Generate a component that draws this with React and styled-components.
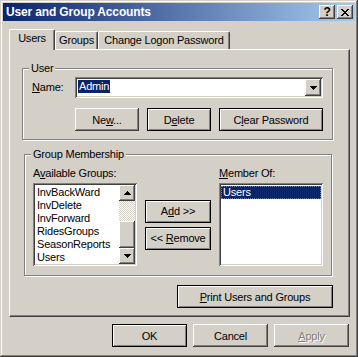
import React from 'react';
import styled, { createGlobalStyle, css } from 'styled-components';

const face = '#d4d0c8';
const shadow = '#808080';
const dark = '#404040';
const navy = '#0a246a';

const GlobalStyle = createGlobalStyle`
  html, body {
    margin: 0;
    padding: 0;
    background: ${face};
  }
  body {
    font-family: 'Liberation Sans', Arial, sans-serif;
    font-size: 11px;
    letter-spacing: -0.2px;
    color: #000;
  }
  * {
    box-sizing: border-box;
  }
`;

const raised = css`
  box-shadow: inset -1px -1px ${dark}, inset 1px 1px #fff, inset -2px -2px ${shadow},
    inset 2px 2px ${face};
`;

const sunken = css`
  box-shadow: inset 1px 1px ${shadow}, inset -1px -1px #fff, inset 2px 2px ${dark},
    inset -2px -2px ${face};
`;

const Window = styled.div`
  width: 358px;
  height: 357px;
  padding: 3px;
  display: flex;
  flex-direction: column;
  background: ${face};
  box-shadow: inset -1px -1px ${dark}, inset 1px 1px ${face}, inset -2px -2px ${shadow},
    inset 2px 2px #fff;
`;

const TitleBar = styled.div`
  height: 18px;
  display: flex;
  align-items: center;
  gap: 2px;
  padding: 0 2px 0 3px;
  background: linear-gradient(to right, ${navy}, #a6caf0);
`;

const Title = styled.div`
  flex: 1;
  color: #fff;
  font-weight: bold;
  font-size: 12px;
  letter-spacing: -0.15px;
  white-space: nowrap;
`;

const CaptionButton = styled.div`
  width: 16px;
  height: 14px;
  display: flex;
  align-items: center;
  justify-content: center;
  background: ${face};
  font-weight: bold;
  font-size: 12px;
  line-height: 1;
  ${raised};
`;

const TabArea = styled.div`
  margin: 8px 5px 0 6px;
`;

const TabStrip = styled.div`
  height: 20px;
  display: flex;
  align-items: flex-end;
`;

const Tab = styled.div`
  position: relative;
  z-index: ${({ $active }) => ($active ? 1 : 0)};
  width: ${({ $w }) => $w}px;
  height: ${({ $active }) => ($active ? 21 : 18)}px;
  margin-bottom: ${({ $active }) => ($active ? -1 : 0)}px;
  padding-top: 2px;
  background: ${face};
  border-top: 1px solid #fff;
  border-left: 1px solid #fff;
  border-right: 1px solid ${dark};
  border-radius: 2px 2px 0 0;
  box-shadow: inset -1px 0 ${shadow};
  text-align: center;
  line-height: 13px;
  white-space: nowrap;
`;

const Panel = styled.div`
  height: 268px;
  display: flex;
  flex-direction: column;
  align-items: flex-start;
  padding: 18px 0 0 12px;
  border-top: 1px solid #fff;
  border-left: 1px solid #fff;
  border-right: 1px solid ${dark};
  border-bottom: 1px solid ${dark};
  box-shadow: inset -1px -1px ${shadow};
`;

const GroupBox = styled.div`
  position: relative;
  width: ${({ $w }) => $w}px;
  margin: ${({ $margin }) => $margin || 0};
  padding: ${({ $pad }) => $pad};
  border: 1px solid ${shadow};
  box-shadow: inset 1px 1px #fff, 1px 1px #fff;
`;

const Legend = styled.span`
  position: absolute;
  top: -7px;
  left: 6px;
  padding: 0 2px;
  background: ${face};
  line-height: 13px;
`;

const UserGrid = styled.div`
  display: grid;
  grid-template-columns: 43px 248px;
  row-gap: 10px;
  align-items: center;
`;

const Label = styled.div`
  grid-column: ${({ $col }) => $col || 'auto'};
  line-height: 13px;
  white-space: nowrap;
`;

const Key = styled.span`
  text-decoration: underline;
`;

const Combo = styled.div`
  height: 21px;
  padding: 2px;
  display: flex;
  background: #fff;
  ${sunken};
`;

const ComboText = styled.div`
  flex: 1;
  padding: 1px 0 0 1px;
`;

const Highlight = styled.span`
  display: inline-block;
  padding: 0 1px;
  line-height: 13px;
  background: ${navy};
  color: #fff;
`;

const ArrowButton = styled.div`
  width: 16px;
  height: ${({ $h }) => ($h ? `${$h}px` : 'auto')};
  display: flex;
  align-items: center;
  justify-content: center;
  background: ${face};
  ${raised};
`;

const ButtonRow = styled.div`
  grid-column: 2;
  display: flex;
  gap: 8px;
`;

const Button = styled.button`
  width: ${({ $w }) => $w}px;
  height: 23px;
  margin: 0;
  padding: 0;
  font: inherit;
  letter-spacing: inherit;
  color: #000;
  background: ${face};
  white-space: nowrap;
  border: ${({ $framed }) => ($framed ? '1px solid #000' : 'none')};
  ${({ $framed }) =>
    $framed
      ? css`
          box-shadow: inset 1px 1px #fff, inset -1px -1px ${shadow};
        `
      : raised}
  ${({ disabled }) =>
    disabled &&
    css`
      color: ${shadow};
      text-shadow: 1px 1px #fff;
    `}
`;

const MemberGrid = styled.div`
  display: grid;
  grid-template-columns: 104px 66px 104px;
  grid-template-rows: 13px 83px;
  column-gap: 8px;
  row-gap: 3px;
`;

const MoveButtons = styled.div`
  grid-column: 2;
  display: flex;
  flex-direction: column;
  justify-content: center;
  gap: 4px;
`;

const ListBox = styled.div`
  height: 83px;
  padding: 2px;
  display: flex;
  overflow: hidden;
  background: #fff;
  ${sunken};
`;

const Items = styled.div`
  flex: 1;
  padding-top: 1px;
  overflow: hidden;
`;

const Item = styled.div`
  height: 13px;
  padding-left: 2px;
  line-height: 13px;
  white-space: nowrap;
  ${({ $selected }) =>
    $selected &&
    css`
      background: ${navy};
      color: #fff;
      outline: 1px dotted #6d7fae;
      outline-offset: -1px;
    `}
`;

const ScrollBar = styled.div`
  width: 16px;
  display: flex;
  flex-direction: column;
`;

const Track = styled.div`
  flex: 1;
  display: flex;
  flex-direction: column;
  justify-content: flex-end;
  background: repeating-conic-gradient(#fff 0% 25%, ${face} 0% 50%) 0 0 / 2px 2px;
`;

const Thumb = styled.div`
  height: 27px;
  background: ${face};
  ${raised};
`;

const PrintRow = styled.div`
  width: 311px;
  margin-top: 9px;
  display: flex;
  justify-content: flex-end;
`;

const Footer = styled.div`
  display: flex;
  justify-content: flex-end;
  gap: 6px;
  margin: 7px 6px 0 0;
`;

const Arrow = ({ up }) => (
  <svg width="7" height="4" viewBox="0 0 7 4" shapeRendering="crispEdges">
    <path
      d={up ? 'M3 0h1v1h1v1h1v1h1v1H0V3h1V2h1V1h1z' : 'M0 0h7v1H6v1H5v1H4v1H3V3H2V2H1V1H0z'}
      fill="#000"
    />
  </svg>
);

const CloseGlyph = () => (
  <svg width="8" height="7" viewBox="0 0 8 7" shapeRendering="crispEdges">
    <path
      d="M0 0h2v1h1v1h2V1h1V0h2v1H7v1H6v1H5v1h1v1h1v1h1v1H6V6H5V5H3v1H2v1H0V6h1V5h1V4h1V3H2V2H1V1H0z"
      fill="#000"
    />
  </svg>
);

const groups = ['InvBackWard', 'InvDelete', 'InvForward', 'RidesGroups', 'SeasonReports', 'Users'];

const App = () => (
  <>
    <GlobalStyle />
    <Window>
      <TitleBar>
        <Title>User and Group Accounts</Title>
        <CaptionButton>?</CaptionButton>
        <CaptionButton>
          <CloseGlyph />
        </CaptionButton>
      </TitleBar>

      <TabArea>
        <TabStrip>
          <Tab $active $w={46}>Users</Tab>
          <Tab $w={43}>Groups</Tab>
          <Tab $w={132}>Change Logon Password</Tab>
        </TabStrip>
        <Panel>
          <GroupBox $w={311} $pad="8px 9px">
            <Legend>User</Legend>
            <UserGrid>
              <Label>
                <Key>N</Key>ame:
              </Label>
              <Combo>
                <ComboText>
                  <Highlight>Admin</Highlight>
                </ComboText>
                <ArrowButton>
                  <Arrow />
                </ArrowButton>
              </Combo>
              <ButtonRow>
                <Button $w={64}>
                  Ne<Key>w</Key>...
                </Button>
                <Button $w={64} $framed>
                  D<Key>e</Key>lete
                </Button>
                <Button $w={104} $framed>
                  C<Key>l</Key>ear Password
                </Button>
              </ButtonRow>
            </UserGrid>
          </GroupBox>

          <GroupBox $w={308} $pad="12px 8px 9px" $margin="14px 0 0 2px">
            <Legend>Group Membership</Legend>
            <MemberGrid>
              <Label>
                A<Key>v</Key>ailable Groups:
              </Label>
              <Label $col={3}>
                <Key>M</Key>ember Of:
              </Label>
              <ListBox>
                <Items>
                  {groups.map((g) => (
                    <Item key={g}>{g}</Item>
                  ))}
                </Items>
                <ScrollBar>
                  <ArrowButton $h={16}>
                    <Arrow up />
                  </ArrowButton>
                  <Track>
                    <Thumb />
                  </Track>
                  <ArrowButton $h={16}>
                    <Arrow />
                  </ArrowButton>
                </ScrollBar>
              </ListBox>
              <MoveButtons>
                <Button $w={66} $framed>
                  A<Key>d</Key>d &gt;&gt;
                </Button>
                <Button $w={66} $framed>
                  &lt;&lt; <Key>R</Key>emove
                </Button>
              </MoveButtons>
              <ListBox>
                <Items>
                  <Item $selected>Users</Item>
                </Items>
              </ListBox>
            </MemberGrid>
          </GroupBox>

          <PrintRow>
            <Button $w={156} $framed>
              <Key>P</Key>rint Users and Groups
            </Button>
          </PrintRow>
        </Panel>
      </TabArea>

      <Footer>
        <Button $w={75} $framed>
          OK
        </Button>
        <Button $w={75}>Cancel</Button>
        <Button $w={75} disabled>
          <Key>A</Key>pply
        </Button>
      </Footer>
    </Window>
  </>
);

export default App;
